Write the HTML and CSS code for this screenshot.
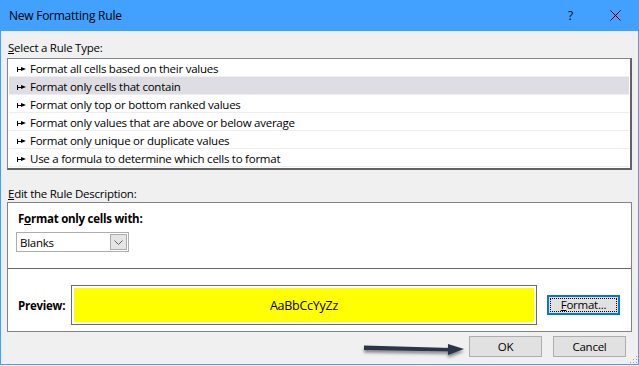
FILE: index.html
```html
<!DOCTYPE html>
<html lang="en">
  <head>
    <meta charset="UTF-8" />
    <title>New Formatting Rule</title>
    <link rel="stylesheet" href="styles.css">
  </head>
  <body>
    <div class="dialog">
      <div class="titlebar">
        <span class="title">New Formatting Rule</span>
        <span class="help">?</span>
        <svg class="close" width="11" height="11" viewBox="0 0 11 11">
          <path d="M0.5 0.5 L10.5 10.5 M10.5 0.5 L0.5 10.5" stroke="#000" stroke-width="1" fill="none" />
        </svg>
      </div>

      <div class="content">
        <div class="label"><u>S</u>elect a Rule Type:</div>
        <ul class="rule-list">
          <li><span class="bullet"></span>Format all cells based on their values</li>
          <li class="selected"><span class="bullet"></span>Format only cells that contain</li>
          <li><span class="bullet"></span>Format only top or bottom ranked values</li>
          <li><span class="bullet"></span>Format only values that are above or below average</li>
          <li><span class="bullet"></span>Format only unique or duplicate values</li>
          <li><span class="bullet"></span>Use a formula to determine which cells to format</li>
        </ul>

        <div class="label label-edit"><u>E</u>dit the Rule Description:</div>
        <div class="desc-box">
          <div class="desc-top">
            <div class="bold">F<u>o</u>rmat only cells with:</div>
            <div class="select">
              <span class="select-value">Blanks</span>
              <span class="select-btn">
                <svg width="9" height="5" viewBox="0 0 9 5">
                  <path d="M0.5 0.5 L4.5 4.5 L8.5 0.5" stroke="#606060" fill="none" />
                </svg>
              </span>
            </div>
          </div>
          <div class="desc-bottom">
            <span class="bold preview-label">Preview:</span>
            <div class="preview">
              <div class="preview-inner">AaBbCcYyZz</div>
            </div>
            <button class="btn btn-focus"><span class="focus-ring"><u>F</u>ormat...</span></button>
          </div>
        </div>

        <div class="actions">
          <button class="btn">OK</button>
          <button class="btn">Cancel</button>
        </div>
      </div>

      <!-- annotation arrow pointing at OK -->
      <svg class="arrow" width="110" height="22" viewBox="0 0 110 22">
        <defs>
          <filter id="shadow" x="-10%" y="-50%" width="120%" height="220%">
            <feDropShadow dx="0" dy="2.5" stdDeviation="1.6" flood-color="#000" flood-opacity="0.45" />
          </filter>
        </defs>
        <g filter="url(#shadow)" fill="#2b3447">
          <path d="M3 4.5 L90 7 L90 10.5 L3 9 Z" />
          <path d="M87 3 L103 8 L87 14 Z" />
        </g>
      </svg>

      <div class="grip"></div>
    </div>
  </body>
</html>
```

FILE: styles.css
```css
body {
  margin: 0;
  font-family: "Open Sans", "Noto Sans", sans-serif;
  font-size: 11.5px;
  letter-spacing: -0.25px;
  color: #000;
}
.dialog {
  position: relative;
  width: 637px;
  height: 364px;
  border: 1px solid #42a0ff;
  border-top: none;
  background-color: #f0f0f0;
}
.titlebar {
  height: 31px;
  margin: 0 -1px;
  background-color: #42a0ff;
  display: flex;
  align-items: center;
  padding-left: 9px;
}
.title {
  font-size: 12px;
  flex: 1;
  margin-top: -1px;
}
.help {
  font-size: 12px;
  margin-right: 37px;
}
.close {
  margin-right: 18px;
}
.content {
  padding: 9px 6px 0 6px;
}
.label {
  line-height: 16px;
  padding-left: 1px;
}
.label-edit {
  margin-top: 16px;
}
.rule-list {
  list-style: none;
  margin: 2px 0 0 0;
  padding: 0 1px 1px 1px;
  background: white;
  border-style: solid;
  border-color: #828790 #626262 #626262 #828790;
  border-width: 1px 2px 2px 1px;
}
.rule-list li {
  height: 15px;
  line-height: 15px;
  padding-top: 2px;
  border-bottom: 1px solid #eeeeee;
  display: flex;
  align-items: center;
  padding-left: 8px;
}
.rule-list li.selected {
  background-color: #dedde3;
}
.bullet {
  position: relative;
  width: 9px;
  height: 5px;
  margin-right: 4px;
  margin-top: 1px;
  border-left: 1px solid #000;
  box-sizing: border-box;
}
.bullet::before {
  content: "";
  position: absolute;
  left: 0;
  top: 2px;
  width: 4px;
  height: 1px;
  background: #000;
}
.bullet::after {
  content: "";
  position: absolute;
  left: 3px;
  top: 0;
  border-left: 5px solid #000;
  border-top: 2.5px solid transparent;
  border-bottom: 2.5px solid transparent;
}
.desc-box {
  margin-top: 0;
  background: white;
  border: 1px solid #80838c;
}
.desc-top {
  padding: 8px 8px 16px 8px;
  border-bottom: 1px solid #6a6a6a;
}
.bold {
  font-weight: bold;
  line-height: 16px;
  padding-left: 2px;
}
.select {
  margin-top: 5px;
  width: 113px;
  height: 20px;
  box-sizing: border-box;
  border: 1px solid #adadad;
  display: flex;
  align-items: center;
  justify-content: space-between;
  padding: 0 1px 0 3px;
}
.select-btn {
  width: 17px;
  height: 16px;
  box-sizing: border-box;
  border: 1px solid #acacac;
  background: #e5e5e5;
  display: flex;
  align-items: center;
  justify-content: center;
}
.desc-bottom {
  display: flex;
  align-items: center;
  padding: 16px 0 6px 8px;
}
.preview-label {
  width: 53px;
  margin-top: 1px;
}
.preview {
  width: 466px;
  height: 40px;
  box-sizing: border-box;
  border: 1px solid #6d6d6d;
  padding: 2px;
  margin-right: 10px;
}
.preview-inner {
  height: 100%;
  background: #ffff00;
  display: flex;
  align-items: center;
  justify-content: center;
  font-size: 12.5px;
}
.btn {
  width: 73px;
  height: 21px;
  box-sizing: border-box;
  border: 1px solid #adadad;
  background: #e1e1e1;
  font-family: inherit;
  font-size: 11.5px;
  letter-spacing: inherit;
  color: #000;
  padding: 0;
}
.btn-focus {
  height: 20px;
  margin-top: -1px;
  border: 2px solid #0078d7;
  padding: 1px;
}
.focus-ring {
  display: flex;
  align-items: center;
  justify-content: center;
  height: 100%;
  box-sizing: border-box;
  border: 1px dotted #000;
}
.actions {
  display: flex;
  justify-content: flex-end;
  gap: 11px;
  margin-top: 4px;
  padding-right: 6px;
}
.arrow {
  position: absolute;
  left: 360px;
  top: 341px;
}
.grip {
  position: absolute;
  right: 1px;
  bottom: 1px;
  width: 8px;
  height: 8px;
  background-image: radial-gradient(circle, #a0a0a0 0.9px, transparent 1px);
  background-size: 3px 3px;
  clip-path: polygon(100% 0, 100% 100%, 0 100%);
}
```
